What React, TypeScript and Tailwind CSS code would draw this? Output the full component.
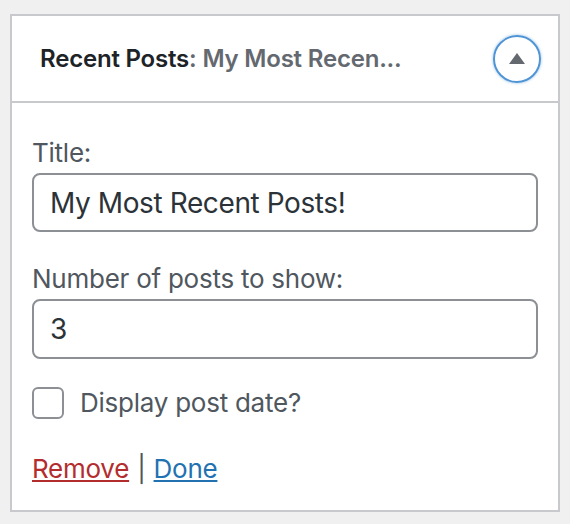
import { useState } from "react";

const font = { fontFamily: "Inter, 'Noto Sans', sans-serif" };

export default function App() {
  const [title, setTitle] = useState("My Most Recent Posts!");
  const [count, setCount] = useState("3");
  const [showDate, setShowDate] = useState(false);

  return (
    <div className="min-h-[524px] w-[570px] bg-[#f0f0f1] pl-[10px] pt-[14px]" style={font}>
      <div className="h-[498px] w-[550px] border-2 border-[#c8c9cc] bg-white">
        <div className="flex h-[87px] items-center justify-between border-b-2 border-[#c8c9cc] pl-[28px] pr-[17px]">
          <h3 className="text-[24px] font-semibold leading-8 tracking-[-0.2px] text-[#1d2327]">
            Recent Posts<span className="text-[#646970]">: My Most Recen...</span>
          </h3>
          <button
            type="button"
            aria-label="Collapse widget"
            className="flex h-[48px] w-[48px] items-center justify-center rounded-full border-2 border-[#4f94d4] shadow-[0_0_3px_rgba(79,148,212,0.6)]"
          >
            <svg width="16" height="11" viewBox="0 0 16 11">
              <path d="M8 0 L16 11 L0 11 Z" fill="#646970" />
            </svg>
          </button>
        </div>

        <div className="px-5 pt-[34px] tracking-[-0.25px]">
          <label className="block text-[26px] leading-8 text-[#50575e]">Title:</label>
          <input
            value={title}
            onChange={(e) => setTitle(e.target.value)}
            className="mt-[4px] block h-[59px] w-full rounded-lg border-2 border-[#8c8f94] px-4 text-[28px] tracking-[-0.4px] text-[#2c3338] outline-none"
          />

          <label className="mt-[31px] block text-[26px] leading-8 text-[#50575e]">Number of posts to show:</label>
          <input
            value={count}
            onChange={(e) => setCount(e.target.value)}
            className="mt-[4px] block h-[60px] w-full rounded-lg border-2 border-[#8c8f94] px-4 text-[28px] text-[#2c3338] outline-none"
          />

          <label className="mt-[28px] flex items-center gap-4 text-[26px] leading-8 text-[#50575e]">
            <span
              onClick={() => setShowDate(!showDate)}
              className="block h-[32px] w-[32px] rounded-md border-2 border-[#8c8f94] bg-white"
            >
              {showDate ? "✓" : null}
            </span>
            Display post date?
          </label>

          <div className="mt-[34px] text-[26px] leading-8 text-[#50575e]">
            <a href="#remove" className="text-[#b32d2e] underline">Remove</a>
            <span className="mx-[8px]">|</span>
            <a href="#done" className="text-[#2271b1] underline">Done</a>
          </div>
        </div>
      </div>
    </div>
  );
}
